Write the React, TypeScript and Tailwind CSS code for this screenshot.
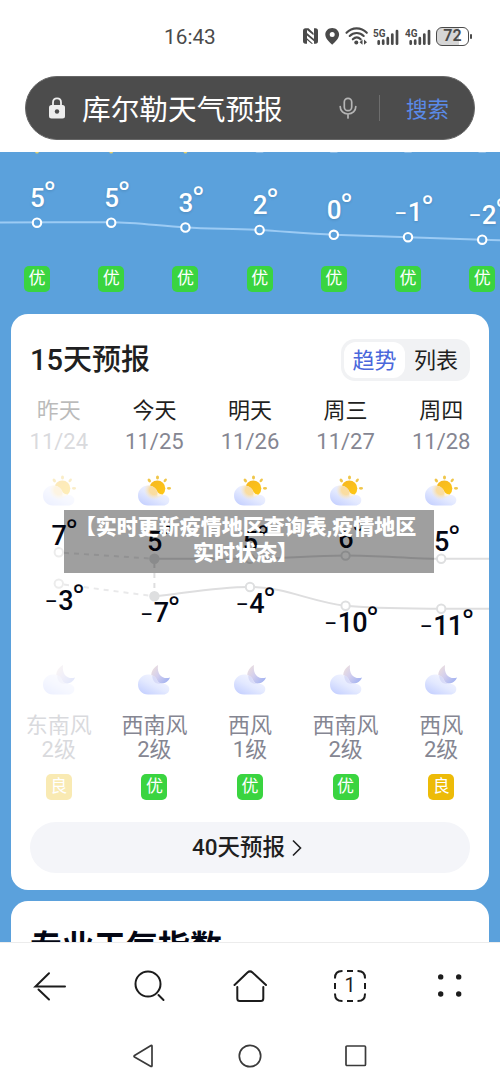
import { clsx } from "clsx";

type Hour = { temp: number; y: number; sunny?: boolean };

type Day = {
  name: string;
  date: string;
  high: number;
  low: number;
  highY: number;
  lowY: number;
  wind: string;
  level: string;
  air: "优" | "良";
  past?: boolean;
};

const HOUR_WIDTH = 74.2;

const hours: Hour[] = [
  { temp: 5, y: 70.7, sunny: true },
  { temp: 5, y: 70.7, sunny: true },
  { temp: 3, y: 75.5, sunny: true },
  { temp: 2, y: 78 },
  { temp: 0, y: 82.8 },
  { temp: -1, y: 85.2 },
  { temp: -2, y: 87.7 },
];

// highY / lowY are measured from the top of the chart area
const days: Day[] = [
  { name: "昨天", date: "11/24", high: 7, low: -3, highY: 46.3, lowY: 77.6, wind: "东南风", level: "2级", air: "良", past: true },
  { name: "今天", date: "11/25", high: 5, low: -7, highY: 52.8, lowY: 90.3, wind: "西南风", level: "2级", air: "优" },
  { name: "明天", date: "11/26", high: 5, low: -4, highY: 52.8, lowY: 81, wind: "西风", level: "1级", air: "优" },
  { name: "周三", date: "11/27", high: 6, low: -10, highY: 49.6, lowY: 99.7, wind: "西南风", level: "2级", air: "优" },
  { name: "周四", date: "11/28", high: 5, low: -11, highY: 52.8, lowY: 102.8, wind: "西风", level: "2级", air: "良" },
];

function Temp({ value }: { value: number }) {
  return (
    <span className="relative flex h-7 items-center leading-7">
      {value < 0 ? <span className="mr-px pt-[3px] text-[19px]">–</span> : null}
      <span className="tracking-[-0.8px]">{Math.abs(value)}</span>
      <span className="absolute -top-[7px] left-full font-['Noto_Sans',sans-serif] text-[27px] font-medium leading-7">°</span>
    </span>
  );
}

function AirBadge({ air }: { air: "优" | "良" }) {
  return (
    <span
      className={clsx(
        "flex h-[26px] w-[26px] items-center justify-center rounded-[5px] pb-px text-[17px] leading-none text-white",
        air === "优" ? "bg-[#3ad440]" : "bg-[#edbb08]",
      )}
    >
      {air}
    </span>
  );
}

const cloudPath =
  "M10 31.500C4 31.500 0 27 0 21.500S4.500 11.500 10 11.500c4.800 0 8 2.500 9.500 6.500 1.300 1.800 3 2.700 5.500 2.800 4 .2 6.300 2.500 6.300 5.200 0 3.200-2.500 5.500-6 5.500z";

function IconDefs() {
  return (
    <svg className="absolute h-0 w-0" aria-hidden="true">
      <defs>
        <linearGradient id="cloud" x1="0.1" y1="0.9" x2="0.75" y2="0.1">
          <stop offset="0" stopColor="#c6d1ff" />
          <stop offset="0.5" stopColor="#e3e9ff" />
          <stop offset="1" stopColor="#f4f5ff" />
        </linearGradient>
        <linearGradient id="sun" x1="0.2" y1="0" x2="0.8" y2="1">
          <stop offset="0" stopColor="#f6b821" />
          <stop offset="1" stopColor="#ffc814" />
        </linearGradient>
        <radialGradient id="glow">
          <stop offset="0.45" stopColor="#fbdc9b" stopOpacity="0.95" />
          <stop offset="1" stopColor="#f9e7c6" stopOpacity="0" />
        </radialGradient>
        <linearGradient id="moon" x1="0" y1="0.1" x2="0.9" y2="0.8">
          <stop offset="0" stopColor="#efe0dc" />
          <stop offset="0.5" stopColor="#d3cfee" />
          <stop offset="1" stopColor="#a7b5f1" />
        </linearGradient>
        <clipPath id="cloudClip">
          <path d={cloudPath} />
        </clipPath>
      </defs>
    </svg>
  );
}

function DayIcon() {
  return (
    <svg className="h-8 w-8 overflow-visible" viewBox="0 0 32 32" aria-hidden="true">
      <g fill="#f0c64a">
        <ellipse cx="19.500" cy="3.500" rx="1.500" ry="2" />
        <ellipse cx="11.300" cy="6.500" rx="1.400" ry="2.100" transform="rotate(-40 11.300 6.500)" />
        <ellipse cx="27.200" cy="6.300" rx="1.300" ry="2.100" transform="rotate(42 27.200 6.300)" />
        <ellipse cx="31" cy="14.300" rx="2.100" ry="1.400" />
      </g>
      <circle cx="19.300" cy="14.500" r="8" fill="url(#sun)" />
      <path d={cloudPath} fill="url(#cloud)" />
      <g clipPath="url(#cloudClip)">
        <circle cx="16" cy="16" r="10" fill="url(#glow)" />
      </g>
      <path d="M19.500 18c1.300 1.800 3 2.700 5.500 2.800-1.500 1.200-3.300 1.700-5.500 1.700z" fill="#fff3d8" />
    </svg>
  );
}

function NightIcon() {
  return (
    <svg className="h-8 w-8 overflow-visible" viewBox="0 0 32 32" aria-hidden="true">
      <path d="M20 2c-4 2.200-7 6.200-6.700 11 .4 4.600 4.500 8 9.200 7.800 4.500-.2 8.300-2.500 9.500-6.300-6 2.200-13.500-1.500-12-12.500z" fill="url(#moon)" />
      <path d={cloudPath} fill="url(#cloud)" />
      <path d="M14.300 12.600c3 1.200 4.600 3.400 5.200 5.400 1.200 1.700 2.300 2.400 4 2.700-1 .4-5 .2-7-1.700-1.600-1.600-2.300-3.800-2.200-6.400z" fill="#d8dbf8" />
    </svg>
  );
}

function Signal({ label }: { label: string }) {
  return (
    <svg className="h-5 w-[26px]" viewBox="0 0 26 20" aria-hidden="true">
      <text x="0" y="10" fontSize="11.500" fontWeight="700" fill="#4a4a4a" textLength="12.500" lengthAdjust="spacingAndGlyphs">
        {label}
      </text>
      <path d="M5.700 14.400v2.300M10.200 13.700v3M14.800 11.200v5.500M19.300 7.500v9.200M24 4v12.700" stroke="#4a4a4a" strokeWidth="2.700" strokeLinecap="round" />
    </svg>
  );
}

function StatusBar() {
  return (
    <div className="flex h-[76px] items-start pl-[164px] pt-[26px] text-[#4a4a4a]">
      <span className="w-[138px] text-[20.800px] leading-[22px]">16:43</span>
      <svg className="h-5 w-[17px]" viewBox="0 0 17 20" aria-hidden="true">
        <path d="M5 2.200H3.500Q1 2.200 1 5v10q0 2.800 2.500 2.800H5zM12 17.800h1.500q2.500 0 2.500-2.800V5q0-2.800-2.500-2.800H12z" fill="#4a4a4a" />
        <path d="M5 2.200h1.500L11.500 7v2.300L5 4zM5 7l7 6v2.300L5 9.500zM5 12.300l6 5.500H9.500L5 14z" fill="#4a4a4a" />
      </svg>
      <svg className="ml-[6px] h-5 w-[15px]" viewBox="0 0 15 20" aria-hidden="true">
        <path fillRule="evenodd" d="M7.200 2C3.200 2 .3 4.900.3 8.600c0 4 4.400 8 6.900 10.200 2.500-2.200 6.900-6.200 6.900-10.200C14.100 4.900 11.200 2 7.200 2zm0 4.100a2.500 2.500 0 1 1 0 5 2.500 2.500 0 0 1 0-5z" fill="#4a4a4a" />
      </svg>
      <svg className="ml-[5px] h-5 w-[24px]" viewBox="0 0 24 20" aria-hidden="true">
        <g fill="none" stroke="#4a4a4a" strokeWidth="2.100" strokeLinecap="round">
          <path d="M1.500 6.800C7.200.9 16 .9 21.800 6.800M4.700 10c4-4 10-4 14 0M7.800 13.300c2.400-2.400 5.500-2.400 7.900 0" />
        </g>
        <circle cx="11.300" cy="16.500" r="2" fill="#4a4a4a" />
        <path d="M17.500 13.600v5.200L14.600 16.200zM19 13.600v5.200l3-2.600z" fill="#4a4a4a" />
      </svg>
      <span className="ml-[4px] flex gap-[6px] pt-px">
        <Signal label="5G" />
        <Signal label="4G" />
      </span>
      <span className="ml-[5px] flex items-center pt-[0.500px]">
        <span className="flex h-[19px] w-[33px] items-center justify-center rounded-[6px] border-[1.500px] border-[#4a4a4a] bg-linear-to-r from-[#d6d6d6] from-72% to-white to-72% text-[16px] font-semibold leading-none">
          72
        </span>
        <span className="ml-px h-[5px] w-[2px] rounded-full bg-[#4a4a4a]" />
      </span>
    </div>
  );
}

function SearchBar() {
  return (
    <div className="mx-[25px] flex h-[63.500px] items-center rounded-full border border-[#666] bg-[#4c4c4c]">
      <svg className="ml-[23px] h-[22px] w-[16px]" viewBox="0 0 16 22" aria-hidden="true">
        <path d="M4 9V5.500C4 3 5.500 1.300 8 1.300S12 3 12 5.500V9" fill="none" stroke="#ededed" strokeWidth="1.800" />
        <rect x="0" y="8" width="16" height="13.500" rx="2.500" fill="#ededed" />
        <circle cx="8" cy="14.500" r="2.200" fill="#4c4c4c" />
      </svg>
      <span className="ml-[17px] w-[257px] pt-[5px] text-[28.700px] leading-10 text-white">库尔勒天气预报</span>
      <svg className="h-[22px] w-[18px]" viewBox="0 0 18 22" fill="none" stroke="#b5b5b5" strokeWidth="1.700" strokeLinecap="round" aria-hidden="true">
        <rect x="5.300" y="1.300" width="7.400" height="12.400" rx="3.700" />
        <path d="M1.200 9.500c0 4.600 3.400 7.500 7.800 7.500s7.800-2.900 7.800-7.500M9 17v4" />
      </svg>
      <span className="ml-[22px] h-[26px] w-px bg-[#6d6d6d]" />
      <span className="ml-[26px] pt-[4px] text-[21.500px] leading-8 text-[#5a8ae8]">搜索</span>
    </div>
  );
}

function HourlyStrip() {
  return (
    <div className="relative h-[162px] text-white">
      <svg className="absolute inset-0 h-full w-full" viewBox="0 0 500 162" aria-hidden="true">
        <path
          d="M0 70.500C20 70.500 90 70 111.200 70.200C135 70.200 160 74 185.400 75.500C210 77 235 76.500 259.600 78C285 79.500 309 81.800 333.800 82.800L408 85.200L482.200 87.700L500 88.200"
          fill="none"
          stroke="#9ccbf4"
          strokeWidth="2"
        />
        {hours.map((h, i) => (
          <g key={i}>
            <ellipse cx={37 + i * HOUR_WIDTH} cy="0" rx={h.sunny ? 1.8 : 4} ry={h.sunny ? 1.6 : 0.6} fill={h.sunny ? "#e3cf6a" : "#b9d5ee"} />
            <circle cx={37 + i * HOUR_WIDTH} cy={h.y} r="4.200" fill="#5ba1dc" stroke="#fff" strokeWidth="2.100" />
          </g>
        ))}
      </svg>
      <div className="flex h-full">
        {hours.map((h, i) => (
          <div key={i} className="flex w-[74.200px] shrink-0 flex-col items-center justify-between pb-[22px]">
            <div className="text-[26px] font-medium [text-shadow:0_1px_3px_rgba(0,0,0,0.15)]" style={{ paddingTop: h.y - 39 }}>
              <Temp value={h.temp} />
            </div>
            <AirBadge air="优" />
          </div>
        ))}
      </div>
    </div>
  );
}

function TrendLines() {
  return (
    <svg className="absolute inset-0 h-full w-full" viewBox="0 0 478 157" aria-hidden="true">
      <g fill="none" stroke="#dededf" strokeWidth="2">
        <g strokeDasharray="5 5" stroke="#e9e9ea">
          <path d="M53 46.800 143.400 52.800M53 78.500 143.400 90.300" />
          <path d="M143.400 57v30" stroke="#dededf" />
        </g>
        <path d="M143.400 52.800H239C270 52.800 300 49.600 334.600 49.600S400 52.800 430.200 52.800H478" />
        <path d="M143.400 90.300C175 87 205 81 239 81C275 81 300 96 334.600 99.700C360 102.500 400 102.500 430.200 102.800H478" />
      </g>
      {days.map((d, i) => {
        const x = 47.8 + i * 95.6;
        const today = i === 1;
        return (
          <g key={d.date} fill={today ? "#dedfe0" : "#fff"} stroke={d.past ? "#ececec" : "#dedfe0"} strokeWidth="2">
            <circle cx={x} cy={d.highY} r="4.200" />
            <circle cx={x} cy={d.lowY} r="4.200" />
          </g>
        );
      })}
    </svg>
  );
}

function ForecastCard() {
  return (
    <section className="mx-[11px] h-[575.500px] rounded-[17px] bg-white pt-[25px]">
      <div className="flex h-[42px] items-center justify-between pl-[19px] pr-[19px]">
        <h2 className="text-[29px] font-medium leading-10 text-[#1f1f21]">15天预报</h2>
        <div className="flex h-[42px] w-[129px] rounded-[14px] bg-[#f1f2f4] p-[3px] text-[22px] leading-[37px]">
          <span className="flex w-[61px] justify-center rounded-[12px] bg-white text-[#4a67db]">趋势</span>
          <span className="flex flex-1 justify-center text-[#1f1f21]">列表</span>
        </div>
      </div>

      <div className="mt-[15px] grid grid-cols-5 text-[22px]">
        {days.map((d) => (
          <div key={d.date} className={clsx("flex flex-col items-center", d.past && "opacity-30")}>
            <span className="leading-[30px] text-[#1f1f21]">{d.name}</span>
            <span className="text-[22px] leading-[31px] text-[#858692]">{d.date}</span>
            <span className="mt-[17px]">
              <DayIcon />
            </span>
          </div>
        ))}
      </div>

      <div className="relative h-[157px]">
        <TrendLines />
        <div className="relative grid grid-cols-5 text-[27px] font-medium text-[#040714]">
          {days.map((d) => (
            <div key={d.date} className="flex flex-col items-center" style={{ paddingTop: d.highY - 30.5 }}>
              <Temp value={d.high} />
              <div style={{ marginTop: d.lowY - d.highY + 5.5 }}>
                <Temp value={d.low} />
              </div>
            </div>
          ))}
        </div>
      </div>

      <div className="grid grid-cols-5 text-[22px] leading-6 text-[#858692]">
        {days.map((d) => (
          <div key={d.date} className={clsx("flex flex-col items-center", d.past && "opacity-30")}>
            <NightIcon />
            <span className="mt-[19px]">{d.wind}</span>
            <span className="mb-[12px]">{d.level}</span>
            <AirBadge air={d.air} />
          </div>
        ))}
      </div>

      <button type="button" className="mx-[19px] mt-[22px] flex h-[51px] w-[440px] items-center justify-center rounded-full bg-[#f4f5f9] pr-[6px] text-[22.500px] font-medium text-[#1f1f21]">
        40天预报
        <svg className="ml-[7px] h-[18px] w-[10px]" viewBox="0 0 10 18" fill="none" stroke="#1f1f21" strokeWidth="1.600" aria-hidden="true">
          <path d="m1 1.500 7.500 7.500L1 16.500" />
        </svg>
      </button>
    </section>
  );
}

function Banner() {
  return (
    <div className="absolute left-[64px] top-[510px] h-[63px] w-[370px] bg-black/[0.376] pr-[7px] pt-[4px] text-center text-[21px] font-black leading-[26px] text-white">
      <p className="whitespace-nowrap">【实时更新疫情地区查询表,疫情地区</p>
      <p>实时状态】</p>
    </div>
  );
}

function BrowserToolbar() {
  return (
    <nav className="grid h-[88px] grid-cols-5 place-items-center border-t border-[#ececec] bg-white pb-[2px]" aria-label="toolbar">
      <svg className="h-9 w-9" viewBox="0 0 36 36" fill="none" stroke="#1c1c1c" strokeWidth="2" strokeLinecap="round" aria-hidden="true">
        <path d="M33 18.500H3.500L17 5.300M6.500 21.500 17 31.500" />
      </svg>
      <svg className="h-9 w-9" viewBox="0 0 36 36" fill="none" stroke="#1c1c1c" strokeWidth="2" strokeLinecap="round" aria-hidden="true">
        <circle cx="16" cy="16" r="12.500" />
        <path d="m26.500 27 5 5" />
      </svg>
      <svg className="h-9 w-9" viewBox="0 0 36 36" fill="none" stroke="#1c1c1c" strokeWidth="2" strokeLinecap="round" strokeLinejoin="round" aria-hidden="true">
        <path d="M2.500 17 15.500 4.500Q18 2.300 20.500 4.500L34 17M5.300 19V30.500q0 2.500 2.500 2.500h21q2.500 0 2.500-2.500V19" />
      </svg>
      <div className="relative flex h-9 w-9 items-center justify-center text-[19.500px] leading-none text-[#1c1c1c]">
        <svg className="absolute inset-0 h-9 w-9" viewBox="0 0 36 36" fill="none" stroke="#1c1c1c" strokeWidth="2" aria-hidden="true">
          <path d="M3 10.500V10q0-7 7-7h.5M15 3h6M25.500 3h.5q7 0 7 7v.5M33 15v6M33 25.500v.5q0 7-7 7h-.5M21 33h-6M10.500 33H10q-7 0-7-7v-.5M3 21v-6" />
        </svg>
        1
      </div>
      <svg className="h-9 w-9" viewBox="0 0 36 36" fill="#1c1c1c" aria-hidden="true">
        <circle cx="8.700" cy="8.900" r="2.700" />
        <circle cx="26.700" cy="8.900" r="2.700" />
        <circle cx="8.700" cy="26" r="2.700" />
        <circle cx="26.700" cy="26" r="2.700" />
      </svg>
    </nav>
  );
}

function SystemNav() {
  return (
    <div className="flex h-[53px] justify-center bg-white">
      {[
        <path key="back" d="M2.500 11.500 19 1.500q1-.4 1 .7v19.600q0 1-1 .6L2.500 13q-1-.8 0-1.500z" />,
        <circle key="home" cx="12" cy="12" r="10.700" />,
        <rect key="recent" x="2" y="2" width="19.500" height="19.500" rx="1" />,
      ].map((shape, i) => (
        <span key={i} className="flex w-[106px] justify-center pt-[14px]">
          <svg className="h-6 w-6" viewBox="0 0 24 24" fill="none" stroke="#3a3a3a" strokeWidth="1.700" strokeLinejoin="round" aria-hidden="true">
            {shape}
          </svg>
        </span>
      ))}
    </div>
  );
}

export default function App() {
  return (
    <div className="relative flex h-[1083px] w-[500px] flex-col overflow-hidden bg-white font-[Roboto,'Noto_Sans_CJK_SC',sans-serif]">
      <IconDefs />
      <header className="h-[152px] shrink-0 bg-white">
        <StatusBar />
        <SearchBar />
      </header>
      <main className="h-[790px] shrink-0 overflow-hidden bg-[#5ba1dc]">
        <HourlyStrip />
        <ForecastCard />
        <section className="mx-[11px] mt-[11.500px] h-[200px] rounded-[17px] bg-white px-[19px] pt-[26px]">
          <h2 className="text-[32px] font-bold leading-10 text-[#040714]">专业天气指数</h2>
        </section>
      </main>
      <BrowserToolbar />
      <SystemNav />
      <Banner />
    </div>
  );
}
